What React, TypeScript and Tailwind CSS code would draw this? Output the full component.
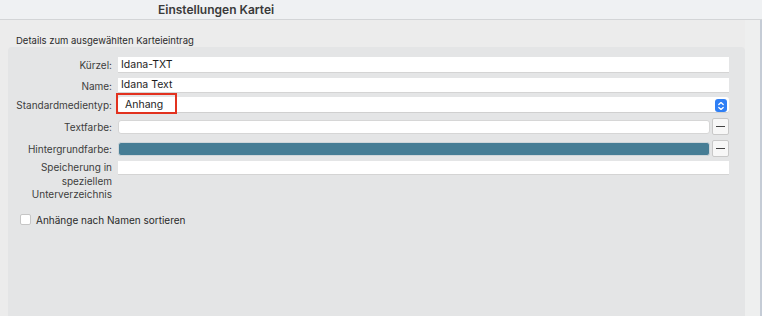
const FONT = { fontFamily: "Inter, 'Liberation Sans', sans-serif" };

function Label({ children, tight }: { children: React.ReactNode; tight?: boolean }) {
  return (
    <div
      className={
        tight
          ? "w-[110px] shrink-0 pr-[6px] text-right text-[10px] leading-[13.5px] text-[#3d3d3d]"
          : "w-[110px] shrink-0 pr-[6px] text-right text-[10px] leading-[14px] text-[#3d3d3d]"
      }
    >
      {children}
    </div>
  );
}

function MinusButton() {
  return (
    <div className="ml-[2px] flex h-[17px] w-[17px] shrink-0 items-center justify-center rounded-[2px] border border-[#c9c9c9] bg-[#f7f7f7]">
      <div className="h-[1.5px] w-[9px] bg-[#444]" />
    </div>
  );
}

export default function App() {
  return (
    <div className="flex h-[316px] w-[762px] flex-col overflow-hidden bg-[#ececec]" style={FONT}>
      {/* Title bar */}
      <div className="flex h-[20px] shrink-0 items-center border-b border-[#d3d5d7] bg-[#eff1f3]">
        <span className="ml-[158px] text-[12px] font-semibold text-[#3a3a3a]">Einstellungen Kartei</span>
      </div>

      <div className="flex flex-1">
        <div className="flex flex-1 flex-col pl-[8px]">
          <div className="mt-[15px] pl-[8px] text-[9.5px] leading-[11px] text-[#2a2a2a]">
            Details zum ausgewählten Karteieintrag
          </div>

          {/* Group box */}
          <div className="mt-[1px] flex flex-1 flex-col rounded-t-[4px] bg-[#e4e5e6] pt-[10px] pr-[16px]">
            <div className="flex h-[16px] items-center">
              <Label>Kürzel:</Label>
              <div className="flex h-full flex-1 items-center border-b border-[#d4d4d4] bg-white pl-[3px] text-[10.5px] text-[#1d1d1d]">
                Idana-TXT
              </div>
            </div>

            <div className="mt-[5px] flex h-[15px] items-center">
              <Label>Name:</Label>
              <div className="flex h-full flex-1 items-center border-b border-[#d4d4d4] bg-white pl-[3px] text-[10.5px] text-[#1d1d1d]">
                Idana Text
              </div>
            </div>

            <div className="mt-[4px] flex h-[16px] items-center">
              <Label>Standardmedientyp:</Label>
              <div className="relative flex h-full flex-1 items-center rounded-[3px] border-b border-[#d0d0d0] bg-white pl-[7px] text-[10.5px] text-[#1d1d1d]">
                Anhang
                <div className="absolute -left-[2px] -top-[4px] h-[21px] w-[61px] border-2 border-[#e2321f]" />
                <div className="absolute right-[2px] top-[2px] flex h-[13px] w-[12px] flex-col items-center justify-center rounded-[3px] bg-[#2f7ff5]">
                  <svg width="8" height="10" viewBox="0 0 8 10" fill="none" stroke="white" strokeWidth="1.3" strokeLinecap="round" strokeLinejoin="round">
                    <path d="M1.8 3.6 L4 1.6 L6.2 3.6" />
                    <path d="M1.8 6.4 L4 8.4 L6.2 6.4" />
                  </svg>
                </div>
              </div>
            </div>

            <div className="mt-[5px] flex h-[17px] items-center">
              <Label>Textfarbe:</Label>
              <div className="h-[14px] flex-1 rounded-[3px] border border-[#d6d6d6] bg-white" />
              <MinusButton />
            </div>

            <div className="mt-[5px] flex h-[17px] items-center">
              <Label>Hintergrundfarbe:</Label>
              <div className="h-[14px] flex-1 rounded-[3px] border border-[#cfd6da] bg-[#467d95]" />
              <MinusButton />
            </div>

            <div className="mt-[4px] flex items-start">
              <Label tight>
                Speicherung in
                <br />
                speziellem
                <br />
                Unterverzeichnis
              </Label>
              <div className="h-[14px] flex-1 border-b border-[#d4d4d4] bg-white" />
            </div>

            <div className="mt-[11px] flex items-center pl-[12px]">
              <div className="h-[11px] w-[11px] rounded-[2px] border border-[#c6c6c6] bg-white" />
              <span className="ml-[5px] text-[10px] leading-[14px] text-[#2a2a2a]">Anhänge nach Namen sortieren</span>
            </div>
          </div>
        </div>

        {/* Right edge strip */}
        <div className="w-[15px] shrink-0 bg-[#eeefef]" />
        <div className="w-[2px] shrink-0 bg-[#c5ccd6]" />
      </div>
    </div>
  );
}
